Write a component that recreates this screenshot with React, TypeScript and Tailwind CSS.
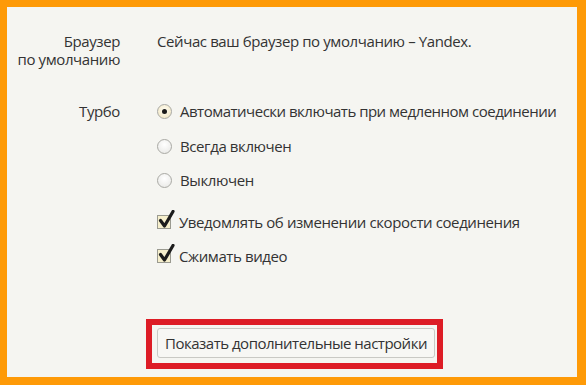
import React from "react";

const font = { fontFamily: '"Open Sans", "Noto Sans", sans-serif' };

function Radio({ checked }: { checked?: boolean }) {
  return (
    <span
      className={
        "mr-[8px] flex h-[15px] w-[15px] shrink-0 items-center justify-center rounded-full border border-[#a9a9a4] " +
        (checked
          ? "bg-[radial-gradient(circle_at_50%_40%,#fffdf3,#efe3bd)]"
          : "bg-[radial-gradient(circle_at_50%_35%,#ffffff,#e6e6e3)]")
      }
    >
      {checked && <span className="h-[5px] w-[5px] rounded-full bg-[#1a1a1a]" />}
    </span>
  );
}

function Check() {
  return (
    <span className="relative mr-[8px] h-[14px] w-[14px] shrink-0 border border-[#9a9a90] bg-[#f6efcc]">
      <svg
        className="absolute left-[0px] top-[-6px]"
        width="17"
        height="19"
        viewBox="0 0 17 19"
      >
        <path
          d="M2.5 10.5 L6.5 16 L15 1.5"
          fill="none"
          stroke="#1c1c1c"
          strokeWidth="3.2"
          strokeLinecap="round"
          strokeLinejoin="round"
        />
      </svg>
    </span>
  );
}

export default function App() {
  return (
    <div
      className="h-[385px] w-[586px] bg-[#fe9a07] pb-[8px] pl-[7px] pr-[9px] pt-[7px]"
      style={font}
    >
      <div className="flex h-full w-full flex-col whitespace-nowrap bg-[#f5f5f1] pt-[25px] text-[15px] leading-[18px] tracking-[-0.4px] text-[#333333]">
        <div className="flex">
          <div className="flex w-[113px] flex-col items-end">
            <span>Браузер</span>
            <span>по умолчанию</span>
          </div>
          <div className="ml-[37px]">Сейчас ваш браузер по умолчанию – Yandex.</div>
        </div>

        <div className="mt-[34px] flex">
          <div className="w-[113px] text-right">Турбо</div>
          <div className="ml-[37px] flex flex-col">
            <div className="flex items-center">
              <Radio checked />
              <span className="tracking-[-0.5px]">Автоматически включать при медленном соединении</span>
            </div>
            <div className="mt-[17px] flex items-center">
              <Radio />
              <span>Всегда включен</span>
            </div>
            <div className="mt-[16px] flex items-center">
              <Radio />
              <span>Выключен</span>
            </div>
            <div className="mt-[24px] flex items-center">
              <Check />
              <span>Уведомлять об изменении скорости соединения</span>
            </div>
            <div className="mt-[16px] flex items-center">
              <Check />
              <span>Сжимать видео</span>
            </div>
          </div>
        </div>

        <div className="mt-[54px] flex justify-center pl-[5px]">
          <div className="border-[6px] border-[#dd1c25] pb-[5px] pl-[5px] pr-[2px] pt-[3px]">
            <button className="h-[30px] w-[278px] whitespace-nowrap rounded-[3px] border border-[#c9c9c4] bg-[#f7f7f4] text-[15px] tracking-[-0.5px] text-[#333333]">
              Показать дополнительные настройки
            </button>
          </div>
        </div>
      </div>
    </div>
  );
}
